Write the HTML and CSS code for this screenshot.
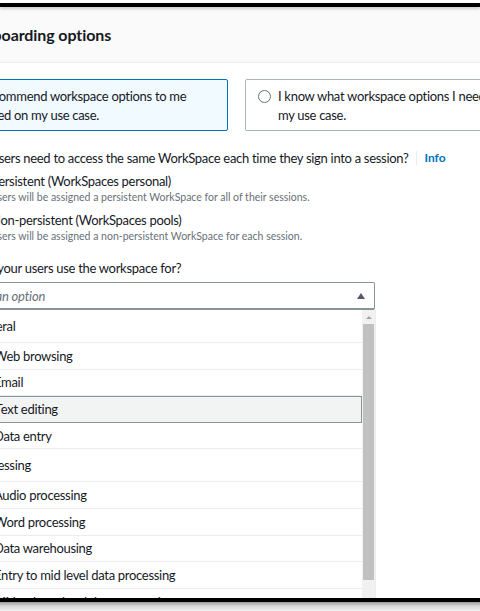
FILE: index.html
```html
<!DOCTYPE html>
<html lang="en">
<head>
<meta charset="utf-8">
<title>Onboarding options</title>
<link rel="stylesheet" href="styles.css">
</head>
<body>
<div class="frame">
  <div class="topbar"></div>
  <div class="panel">
    <div class="hdr"><h2 class="title">Onboarding options</h2></div>
    <div class="content">
      <div class="tiles">
        <div class="tile selected">
          <span class="radio on"></span>
          <span class="tile-text">Recommend workspace options to me based on my use case.</span>
        </div>
        <div class="tile">
          <span class="radio"></span>
          <span class="tile-text">I know what workspace options I need for my use case.</span>
        </div>
      </div>

      <div class="question">
        <span>Do your users need to access the same WorkSpace each time they sign into a session?</span>
        <span class="sep"></span>
        <a class="info">Info</a>
      </div>
      <div class="options">
        <div class="opt">
          <span class="radio small"></span>
          <div class="opt-body">
            <div class="opt-label">Persistent (WorkSpaces personal)</div>
            <div class="opt-desc">Users will be assigned a persistent WorkSpace for all of their sessions.</div>
          </div>
        </div>
        <div class="opt">
          <span class="radio small"></span>
          <div class="opt-body">
            <div class="opt-label">Non-persistent (WorkSpaces pools)</div>
            <div class="opt-desc">Users will be assigned a non-persistent WorkSpace for each session.</div>
          </div>
        </div>
      </div>

      <div class="question q2">What do your users use the workspace for?</div>
      <div class="select">
        <span class="placeholder">Choose an option</span>
        <span class="caret"></span>
      </div>
      <div class="dropdown">
        <ul class="list">
          <li class="group">General</li>
          <li class="item">Web browsing</li>
          <li class="item">Email</li>
          <li class="item hl">Text editing</li>
          <li class="item">Data entry</li>
          <li class="group">Processing</li>
          <li class="item">Audio processing</li>
          <li class="item">Word processing</li>
          <li class="item">Data warehousing</li>
          <li class="item">Entry to mid level data processing</li>
          <li class="item">Mid to large level data processing</li>
        </ul>
        <div class="scrollbar">
          <span class="arrow"></span>
          <span class="thumb"></span>
        </div>
      </div>
    </div>
  </div>
  <div class="bottombar"></div>
</div>
</body>
</html>
```

FILE: styles.css
```css
html, body {
  margin: 0;
  padding: 0;
  background: #ffffff;
}
body {
  font-family: Lato, "Liberation Sans", Arial, sans-serif;
  color: #16191f;
  width: 480px;
  height: 611px;
  overflow: hidden;
}
.frame {
  position: relative;
  width: 480px;
  height: 611px;
  overflow: hidden;
  padding-top: 7px;
  box-sizing: border-box;
}
.topbar {
  position: absolute;
  left: 0;
  top: 3px;
  width: 480px;
  height: 4px;
  background: #000;
  box-shadow: 0 2px 3px rgba(0,0,0,0.18);
  z-index: 5;
}
.bottombar {
  position: absolute;
  left: 0;
  top: 598px;
  width: 480px;
  height: 13px;
  background: linear-gradient(#000 0, #000 4px, #9a9a9a 4px, #d6d6d6 8px, #f2f2f2 13px);
  z-index: 5;
}
.panel {
  margin-left: -55px;
  width: 600px;
}
.hdr {
  height: 55px;
  background: #fafafa;
  border-bottom: 1px solid #eaeded;
  display: flex;
  align-items: center;
  padding-left: 26px;
}
.title {
  margin: 0;
  font-size: 16px;
  font-weight: 700;
  color: #16191f;
  letter-spacing: -0.1px;
}
.content {
  padding-top: 16px;
}
.tiles {
  display: flex;
  gap: 17px;
}
.tile {
  width: 283px;
  box-sizing: border-box;
  border: 1px solid #aab7b8;
  border-radius: 2px;
  padding: 7px 12px 5px 12px;
  display: flex;
  align-items: flex-start;
  gap: 7px;
  font-size: 13px;
  line-height: 19px;
  letter-spacing: -0.3px;
  background: #fff;
}
.tile.selected {
  border-color: #0073bb;
  background: #f1faff;
}
.radio {
  flex: none;
  width: 11px;
  height: 11px;
  border: 1.5px solid #687078;
  border-radius: 50%;
  margin-top: 3px;
  background: #fff;
}
.radio.on {
  border: 4px solid #0073bb;
  width: 6px;
  height: 6px;
}
.question {
  margin-top: 17px;
  font-size: 13px;
  line-height: 20px;
  letter-spacing: -0.3px;
  display: flex;
  align-items: center;
  white-space: nowrap;
}
.sep {
  width: 1px;
  height: 14px;
  background: #eaeded;
  margin: 0 7px 0 8px;
}
.info {
  color: #0073bb;
  font-weight: 700;
  font-size: 12px;
  letter-spacing: 0;
}
.options {
  margin-top: 3px;
  display: flex;
  flex-direction: column;
  gap: 6px;
}
.opt {
  display: flex;
  gap: 8px;
  padding-left: 25px;
}
.radio.small {
  margin-top: 4px;
}
.opt-label {
  font-size: 13px;
  line-height: 20px;
  letter-spacing: -0.3px;
  white-space: nowrap;
}
.opt-desc {
  font-size: 10.5px;
  line-height: 13px;
  color: #687078;
  white-space: nowrap;
  margin-left: -1px;
}
.q2 {
  margin-top: 15px;
  padding-left: 2px;
}
.select {
  margin-top: 4px;
  width: 430px;
  height: 28px;
  box-sizing: border-box;
  border: 1px solid #879596;
  border-bottom-width: 2px;
  border-radius: 2px;
  display: flex;
  align-items: center;
  justify-content: space-between;
  padding: 0 9px 0 8px;
}
.placeholder {
  font-style: italic;
  color: #687078;
  font-size: 13px;
  letter-spacing: -0.2px;
}
.caret {
  width: 0;
  height: 0;
  border-left: 4.5px solid transparent;
  border-right: 4.5px solid transparent;
  border-bottom: 6px solid #545b64;
}
.dropdown {
  width: 431px;
  display: flex;
  height: 300px;
  border-right: 1px solid #eaeded;
  box-sizing: border-box;
}
.list {
  list-style: none;
  margin: 0;
  padding: 0;
  flex: 1;
}
.list li {
  box-sizing: border-box;
  display: flex;
  align-items: center;
  border-bottom: 1px solid #eaeded;
  font-size: 13px;
  letter-spacing: -0.3px;
  white-space: nowrap;
}
.group {
  height: 33px;
  padding-left: 28px;
}
.item {
  height: 26.6px;
  padding-left: 49px;
}
.item.hl {
  background: #f2f3f3;
  border: 1px solid #879596;
}
.scrollbar {
  width: 13px;
  background: #f1f1f1;
  display: flex;
  flex-direction: column;
  align-items: center;
}
.arrow {
  margin-top: 6px;
  width: 0;
  height: 0;
  border-left: 3px solid transparent;
  border-right: 3px solid transparent;
  border-bottom: 3px solid #a3a3a3;
}
.thumb {
  margin-top: 5px;
  width: 11px;
  height: 256px;
  background: #c1c1c1;
}
```
